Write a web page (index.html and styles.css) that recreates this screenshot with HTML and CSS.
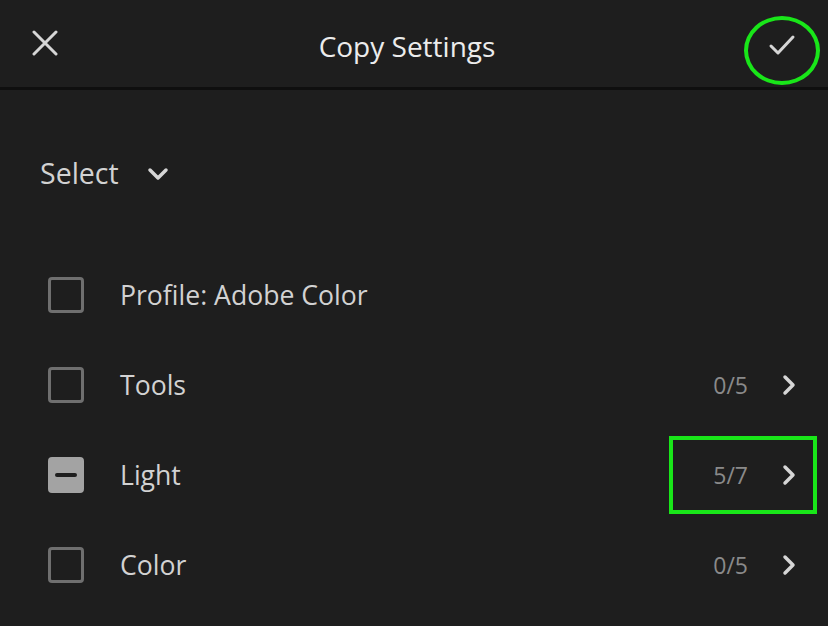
FILE: index.html
```html
<!DOCTYPE html>
<html lang="en">
<head>
    <meta charset="UTF-8">
    <meta name="viewport" content="width=device-width, initial-scale=1.0">
    <title>Copy Settings</title>
    <link rel="stylesheet" href="styles.css">
</head>
<body>
    <div class="header">
        <button class="icon-button close">
            <svg width="26" height="26" viewBox="0 0 26 26">
                <path d="M2 2 L24 24 M24 2 L2 24" stroke="#d6d6d6" stroke-width="3" stroke-linecap="round"/>
            </svg>
        </button>
        <div class="title">Copy Settings</div>
        <button class="icon-button confirm">
            <svg width="28" height="22" viewBox="0 0 28 22">
                <path d="M3 12 L10 19 L25 3" fill="none" stroke="#d6d6d6" stroke-width="3" stroke-linecap="round" stroke-linejoin="round"/>
            </svg>
            <span class="ring"></span>
        </button>
    </div>

    <div class="select-row">
        <span>Select</span>
        <svg width="22" height="14" viewBox="0 0 22 14">
            <path d="M3 3 L11 11 L19 3" fill="none" stroke="#d6d6d6" stroke-width="3.5" stroke-linecap="round" stroke-linejoin="round"/>
        </svg>
    </div>

    <div class="list">
        <div class="row">
            <span class="checkbox"></span>
            <span class="label">Profile: Adobe Color</span>
        </div>
        <div class="row">
            <span class="checkbox"></span>
            <span class="label">Tools</span>
            <span class="count">0/5</span>
            <svg class="chevron" width="16" height="22" viewBox="0 0 16 22">
                <path d="M4 3 L12 11 L4 19" fill="none" stroke="#d6d6d6" stroke-width="3.5" stroke-linecap="round" stroke-linejoin="round"/>
            </svg>
        </div>
        <div class="row">
            <span class="checkbox partial"><span class="dash"></span></span>
            <span class="label">Light</span>
            <span class="count">5/7</span>
            <svg class="chevron" width="16" height="22" viewBox="0 0 16 22">
                <path d="M4 3 L12 11 L4 19" fill="none" stroke="#d6d6d6" stroke-width="3.5" stroke-linecap="round" stroke-linejoin="round"/>
            </svg>
            <span class="highlight"></span>
        </div>
        <div class="row">
            <span class="checkbox"></span>
            <span class="label">Color</span>
            <span class="count">0/5</span>
            <svg class="chevron" width="16" height="22" viewBox="0 0 16 22">
                <path d="M4 3 L12 11 L4 19" fill="none" stroke="#d6d6d6" stroke-width="3.5" stroke-linecap="round" stroke-linejoin="round"/>
            </svg>
        </div>
    </div>
</body>
</html>
```

FILE: styles.css
```css
body {
    margin: 0;
    padding: 0;
    background-color: #1e1e1e;
    color: #d2d2d2;
    font-family: "Open Sans", "Noto Sans", sans-serif;
    height: 626px;
    overflow: hidden;
}
.header {
    height: 87px;
    border-bottom: 3px solid #0f0f0f;
    display: flex;
    align-items: center;
    justify-content: space-between;
    padding: 0 0 0 32px;
    position: relative;
}
.icon-button {
    background: none;
    border: none;
    padding: 0;
    display: flex;
    align-items: center;
    justify-content: center;
    position: relative;
}
.close {
    width: 26px;
    height: 26px;
    margin-top: -2px;
}
.confirm {
    width: 76px;
    height: 70px;
    margin-right: 8px;
    margin-top: 14px;
}
.confirm svg {
    margin-top: -12px;
}
.ring {
    position: absolute;
    left: 0;
    top: 0;
    width: 68px;
    height: 61px;
    border: 4px solid #19e619;
    border-radius: 50%;
}
.title {
    position: absolute;
    left: 0;
    right: 14px;
    top: 27px;
    text-align: center;
    font-size: 28px;
    color: #ececec;
    pointer-events: none;
}
.select-row {
    display: flex;
    align-items: center;
    gap: 28px;
    padding: 64px 0 0 40px;
    font-size: 28.5px;
    height: 38px;
}
.select-row svg {
    margin-top: 2px;
}
.list {
    padding-top: 58px;
}
.row {
    height: 90px;
    display: flex;
    align-items: center;
    padding: 0 31px 0 48px;
    position: relative;
}
.checkbox {
    width: 30px;
    height: 30px;
    border: 3px solid #6f6f6f;
    border-radius: 4px;
    margin-right: 36px;
    flex-shrink: 0;
    display: flex;
    align-items: center;
    justify-content: center;
}
.checkbox.partial {
    background-color: #a3a3a3;
    border-color: #a3a3a3;
}
.dash {
    width: 22px;
    height: 4px;
    border-radius: 2px;
    background-color: #1e1e1e;
}
.label {
    font-size: 26.6px;
    flex-grow: 1;
}
.count {
    font-size: 23px;
    color: #8a8a8a;
    margin-right: 33px;
}
.chevron {
    flex-shrink: 0;
}
.highlight {
    position: absolute;
    left: 669px;
    top: 6px;
    width: 140px;
    height: 70px;
    border: 4px solid #19e619;
}
```
